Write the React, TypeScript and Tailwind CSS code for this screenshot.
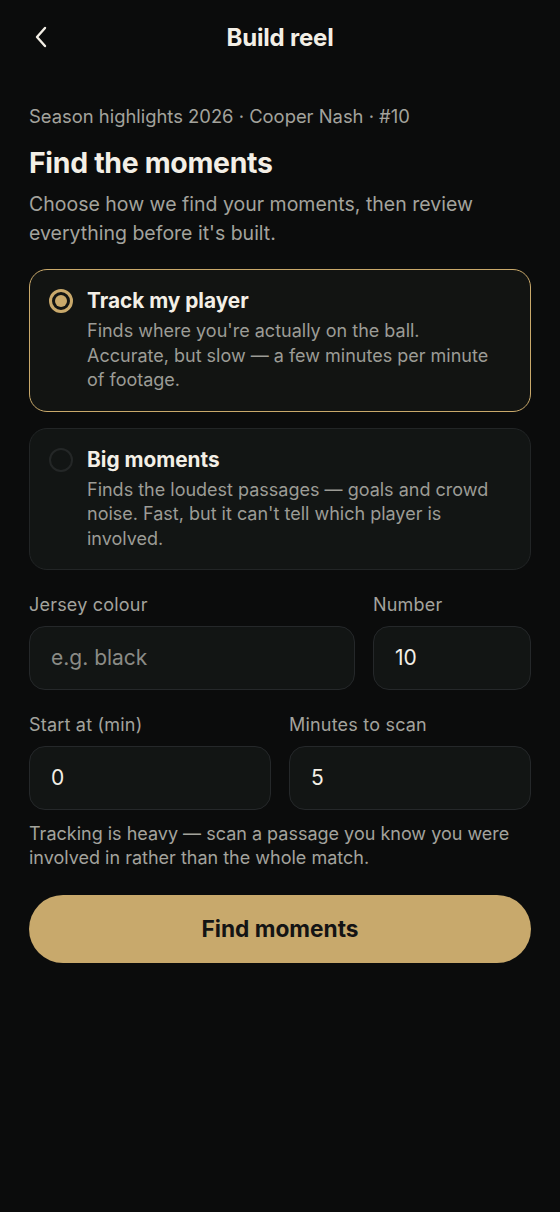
import React from 'react';

const FONT = { fontFamily: 'Inter, "Noto Sans", "Liberation Sans", sans-serif' };

type Option = {
  id: string;
  title: string;
  body: string;
};

const options: Option[] = [
  {
    id: 'track',
    title: 'Track my player',
    body: "Finds where you're actually on the ball. Accurate, but slow — a few minutes per minute of footage.",
  },
  {
    id: 'big',
    title: 'Big moments',
    body: "Finds the loudest passages — goals and crowd noise. Fast, but it can't tell which player is involved.",
  },
];

const Field: React.FC<{ label: string; value?: string; placeholder?: string }> = ({ label, value, placeholder }) => (
  <div className="flex flex-col">
    <label className="text-[18px] leading-[24px] text-[#a3a39d] tracking-[0.2px]">{label}</label>
    <div className="mt-[9px] h-[64px] rounded-[16px] border border-[#25282a] bg-[#121514] px-[21px] flex items-center">
      {value ? (
        <span className="text-[21px] text-[#f3efe6]">{value}</span>
      ) : (
        <span className="text-[21px] text-[#8a8b86]">{placeholder}</span>
      )}
    </div>
  </div>
);

export default function App() {
  const selected = 'track';

  return (
    <div className="min-h-screen bg-[#0b0c0c] text-[#f3efe6]" style={FONT}>
      {/* Header */}
      <header className="relative h-[76px] flex items-center justify-center">
        <button className="absolute left-[28px] top-[24px] w-[26px] h-[26px] flex items-center justify-center text-[#f3efe6]">
          <svg width="14" height="22" viewBox="0 0 14 22" fill="none">
            <path d="M11 2L3 11l8 9" stroke="currentColor" strokeWidth="2.4" strokeLinecap="round" strokeLinejoin="round" />
          </svg>
        </button>
        <h1 className="text-[24px] font-bold tracking-[-0.2px]">Build reel</h1>
      </header>

      <main className="px-[29px] pt-[26px]">
        <p className="text-[18.4px] leading-[28px] text-[#a3a39d]">Season highlights 2026 · Cooper Nash · #10</p>
        <h2 className="mt-[16px] text-[28.4px] leading-[34px] font-bold tracking-[-0.3px]">Find the moments</h2>
        <p className="mt-[10px] text-[19.5px] leading-[29px] text-[#a3a39d]">
          Choose how we find your moments, then review everything before it's built.
        </p>

        <div className="mt-[21px] flex flex-col gap-[16px]">
          {options.map((o) => {
            const on = o.id === selected;
            return (
              <div
                key={o.id}
                className={
                  on
                    ? 'rounded-[18px] border-[1.5px] border-[#c9a96b] bg-[#121412] pl-[19px] pr-[28px] pt-[18px] pb-[18px] flex gap-[14px]'
                    : 'rounded-[18px] border-[1.5px] border-[#222526] bg-[#121514] pl-[19px] pr-[28px] pt-[18px] pb-[18px] flex gap-[14px]'
                }
              >
                <div className="pt-[1px]">
                  {on ? (
                    <div className="w-[24px] h-[24px] rounded-full border-[3px] border-[#c9a96b] flex items-center justify-center">
                      <div className="w-[12px] h-[12px] rounded-full bg-[#c9a96b]" />
                    </div>
                  ) : (
                    <div className="w-[24px] h-[24px] rounded-full border-[2.5px] border-[#242727]" />
                  )}
                </div>
                <div className="flex-1">
                  <div className="text-[20.8px] leading-[26px] font-bold">{o.title}</div>
                  <p className="mt-[5px] text-[18px] leading-[24.5px] text-[#9c9c96]">{o.body}</p>
                </div>
              </div>
            );
          })}
        </div>

        <div className="mt-[23px] grid grid-cols-[326px_1fr] gap-[18px]">
          <Field label="Jersey colour" placeholder="e.g. black" />
          <Field label="Number" value="10" />
        </div>

        <div className="mt-[23px] grid grid-cols-2 gap-[18px]">
          <Field label="Start at (min)" value="0" />
          <Field label="Minutes to scan" value="5" />
        </div>

        <p className="mt-[12px] text-[18px] leading-[24px] text-[#a3a39d]">
          Tracking is heavy — scan a passage you know you were involved in rather than the whole match.
        </p>

        <button className="mt-[25px] w-full h-[68px] rounded-full bg-[#c8a96c] text-[#141414] text-[22.7px] font-bold">
          Find moments
        </button>
      </main>
    </div>
  );
}
